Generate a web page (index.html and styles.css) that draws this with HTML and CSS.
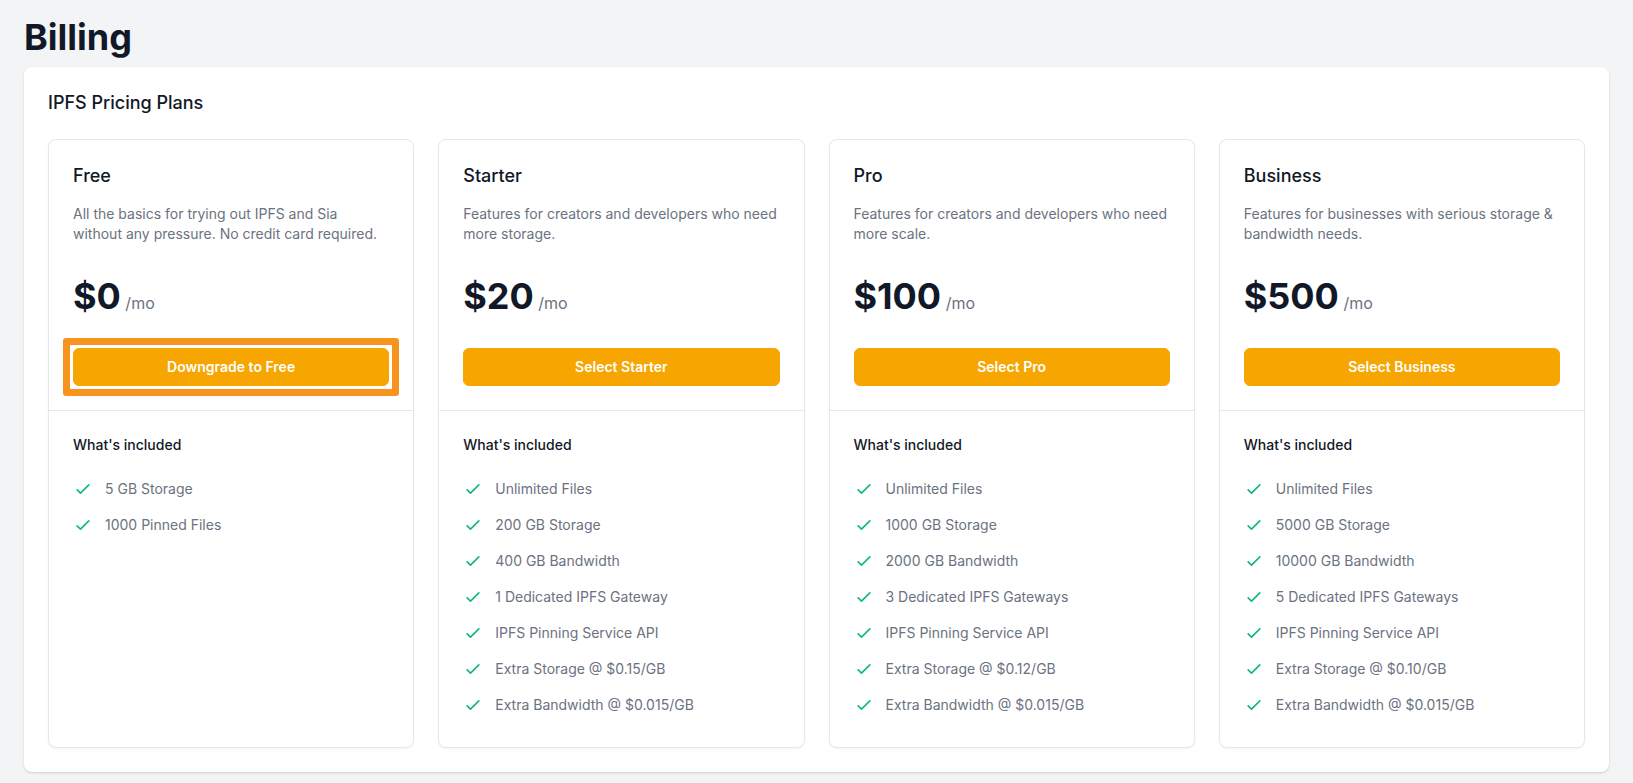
FILE: index.html
```html
<!DOCTYPE html>
<html lang="en">
<head>
<meta charset="utf-8">
<title>Billing</title>
<link rel="stylesheet" href="styles.css">
</head>
<body>
<main class="page">
  <h1 class="page-title">Billing</h1>
  <section class="panel">
    <h2 class="panel-title">IPFS Pricing Plans</h2>
    <div class="plans">
      <div class="plan">
        <div class="plan-top">
          <h3 class="plan-name">Free</h3>
          <p class="plan-desc">All the basics for trying out IPFS and Sia without any pressure. No credit card required.</p>
          <p class="plan-price"><span class="amount">$0</span> <span class="per">/mo</span></p>
          <a class="plan-btn is-focused" href="#">Downgrade to Free</a>
        </div>
        <div class="plan-bottom">
          <h4 class="incl">What's included</h4>
          <ul class="features">
            <li><svg class="check" viewBox="0 0 24 24" fill="none" stroke="currentColor" stroke-width="2" stroke-linecap="round" stroke-linejoin="round"><path d="M5 13l4 4L19 7"/></svg><span>5 GB Storage</span></li>
            <li><svg class="check" viewBox="0 0 24 24" fill="none" stroke="currentColor" stroke-width="2" stroke-linecap="round" stroke-linejoin="round"><path d="M5 13l4 4L19 7"/></svg><span>1000 Pinned Files</span></li>
          </ul>
        </div>
      </div>

      <div class="plan">
        <div class="plan-top">
          <h3 class="plan-name">Starter</h3>
          <p class="plan-desc">Features for creators and developers who need more storage.</p>
          <p class="plan-price"><span class="amount">$20</span> <span class="per">/mo</span></p>
          <a class="plan-btn" href="#">Select Starter</a>
        </div>
        <div class="plan-bottom">
          <h4 class="incl">What's included</h4>
          <ul class="features">
            <li><svg class="check" viewBox="0 0 24 24" fill="none" stroke="currentColor" stroke-width="2" stroke-linecap="round" stroke-linejoin="round"><path d="M5 13l4 4L19 7"/></svg><span>Unlimited Files</span></li>
            <li><svg class="check" viewBox="0 0 24 24" fill="none" stroke="currentColor" stroke-width="2" stroke-linecap="round" stroke-linejoin="round"><path d="M5 13l4 4L19 7"/></svg><span>200 GB Storage</span></li>
            <li><svg class="check" viewBox="0 0 24 24" fill="none" stroke="currentColor" stroke-width="2" stroke-linecap="round" stroke-linejoin="round"><path d="M5 13l4 4L19 7"/></svg><span>400 GB Bandwidth</span></li>
            <li><svg class="check" viewBox="0 0 24 24" fill="none" stroke="currentColor" stroke-width="2" stroke-linecap="round" stroke-linejoin="round"><path d="M5 13l4 4L19 7"/></svg><span>1 Dedicated IPFS Gateway</span></li>
            <li><svg class="check" viewBox="0 0 24 24" fill="none" stroke="currentColor" stroke-width="2" stroke-linecap="round" stroke-linejoin="round"><path d="M5 13l4 4L19 7"/></svg><span>IPFS Pinning Service API</span></li>
            <li><svg class="check" viewBox="0 0 24 24" fill="none" stroke="currentColor" stroke-width="2" stroke-linecap="round" stroke-linejoin="round"><path d="M5 13l4 4L19 7"/></svg><span>Extra Storage @ $0.15/GB</span></li>
            <li><svg class="check" viewBox="0 0 24 24" fill="none" stroke="currentColor" stroke-width="2" stroke-linecap="round" stroke-linejoin="round"><path d="M5 13l4 4L19 7"/></svg><span>Extra Bandwidth @ $0.015/GB</span></li>
          </ul>
        </div>
      </div>

      <div class="plan">
        <div class="plan-top">
          <h3 class="plan-name">Pro</h3>
          <p class="plan-desc">Features for creators and developers who need more scale.</p>
          <p class="plan-price"><span class="amount">$100</span> <span class="per">/mo</span></p>
          <a class="plan-btn" href="#">Select Pro</a>
        </div>
        <div class="plan-bottom">
          <h4 class="incl">What's included</h4>
          <ul class="features">
            <li><svg class="check" viewBox="0 0 24 24" fill="none" stroke="currentColor" stroke-width="2" stroke-linecap="round" stroke-linejoin="round"><path d="M5 13l4 4L19 7"/></svg><span>Unlimited Files</span></li>
            <li><svg class="check" viewBox="0 0 24 24" fill="none" stroke="currentColor" stroke-width="2" stroke-linecap="round" stroke-linejoin="round"><path d="M5 13l4 4L19 7"/></svg><span>1000 GB Storage</span></li>
            <li><svg class="check" viewBox="0 0 24 24" fill="none" stroke="currentColor" stroke-width="2" stroke-linecap="round" stroke-linejoin="round"><path d="M5 13l4 4L19 7"/></svg><span>2000 GB Bandwidth</span></li>
            <li><svg class="check" viewBox="0 0 24 24" fill="none" stroke="currentColor" stroke-width="2" stroke-linecap="round" stroke-linejoin="round"><path d="M5 13l4 4L19 7"/></svg><span>3 Dedicated IPFS Gateways</span></li>
            <li><svg class="check" viewBox="0 0 24 24" fill="none" stroke="currentColor" stroke-width="2" stroke-linecap="round" stroke-linejoin="round"><path d="M5 13l4 4L19 7"/></svg><span>IPFS Pinning Service API</span></li>
            <li><svg class="check" viewBox="0 0 24 24" fill="none" stroke="currentColor" stroke-width="2" stroke-linecap="round" stroke-linejoin="round"><path d="M5 13l4 4L19 7"/></svg><span>Extra Storage @ $0.12/GB</span></li>
            <li><svg class="check" viewBox="0 0 24 24" fill="none" stroke="currentColor" stroke-width="2" stroke-linecap="round" stroke-linejoin="round"><path d="M5 13l4 4L19 7"/></svg><span>Extra Bandwidth @ $0.015/GB</span></li>
          </ul>
        </div>
      </div>

      <div class="plan">
        <div class="plan-top">
          <h3 class="plan-name">Business</h3>
          <p class="plan-desc">Features for businesses with serious storage &amp; bandwidth needs.</p>
          <p class="plan-price"><span class="amount">$500</span> <span class="per">/mo</span></p>
          <a class="plan-btn" href="#">Select Business</a>
        </div>
        <div class="plan-bottom">
          <h4 class="incl">What's included</h4>
          <ul class="features">
            <li><svg class="check" viewBox="0 0 24 24" fill="none" stroke="currentColor" stroke-width="2" stroke-linecap="round" stroke-linejoin="round"><path d="M5 13l4 4L19 7"/></svg><span>Unlimited Files</span></li>
            <li><svg class="check" viewBox="0 0 24 24" fill="none" stroke="currentColor" stroke-width="2" stroke-linecap="round" stroke-linejoin="round"><path d="M5 13l4 4L19 7"/></svg><span>5000 GB Storage</span></li>
            <li><svg class="check" viewBox="0 0 24 24" fill="none" stroke="currentColor" stroke-width="2" stroke-linecap="round" stroke-linejoin="round"><path d="M5 13l4 4L19 7"/></svg><span>10000 GB Bandwidth</span></li>
            <li><svg class="check" viewBox="0 0 24 24" fill="none" stroke="currentColor" stroke-width="2" stroke-linecap="round" stroke-linejoin="round"><path d="M5 13l4 4L19 7"/></svg><span>5 Dedicated IPFS Gateways</span></li>
            <li><svg class="check" viewBox="0 0 24 24" fill="none" stroke="currentColor" stroke-width="2" stroke-linecap="round" stroke-linejoin="round"><path d="M5 13l4 4L19 7"/></svg><span>IPFS Pinning Service API</span></li>
            <li><svg class="check" viewBox="0 0 24 24" fill="none" stroke="currentColor" stroke-width="2" stroke-linecap="round" stroke-linejoin="round"><path d="M5 13l4 4L19 7"/></svg><span>Extra Storage @ $0.10/GB</span></li>
            <li><svg class="check" viewBox="0 0 24 24" fill="none" stroke="currentColor" stroke-width="2" stroke-linecap="round" stroke-linejoin="round"><path d="M5 13l4 4L19 7"/></svg><span>Extra Bandwidth @ $0.015/GB</span></li>
          </ul>
        </div>
      </div>
    </div>
  </section>
</main>
</body>
</html>
```
FILE: styles.css
```css
* { box-sizing: border-box; }
html, body { margin: 0; padding: 0; }
body {
  background: #f3f4f6;
  font-family: Inter, "Noto Sans", "Liberation Sans", sans-serif;
  color: #111827;
  font-size: 16px;
  line-height: 24px;
}
.page {
  padding: 17px 24px 11px;
}
.page-title {
  margin: 0 0 10px;
  font-size: 36px;
  line-height: 40px;
  font-weight: 700;
  color: #111827;
}
.panel {
  background: #fff;
  border-radius: 8px;
  box-shadow: 0 1px 3px rgba(0,0,0,0.1), 0 1px 2px rgba(0,0,0,0.06);
  padding: 24px;
}
.panel-title {
  margin: 0 0 24px;
  font-size: 18px;
  line-height: 24px;
  font-weight: 500;
  color: #111827;
}
.plans {
  display: grid;
  grid-template-columns: repeat(4, 1fr);
  gap: 24px;
}
.plan {
  border: 1px solid #e5e7eb;
  border-radius: 8px;
  box-shadow: 0 1px 2px rgba(0,0,0,0.05);
  background: #fff;
}
.plan-top {
  padding: 24px;
  border-bottom: 1px solid #e5e7eb;
}
.plan-name {
  margin: 0;
  font-size: 18px;
  line-height: 24px;
  font-weight: 500;
  color: #111827;
}
.plan-desc {
  margin: 16px 0 0;
  font-size: 14px;
  line-height: 20px;
  color: #6b7280;
  height: 40px;
}
.plan-price {
  margin: 32px 0 0;
}
.amount {
  font-size: 36px;
  line-height: 40px;
  font-weight: 700;
  color: #111827;
}
.per {
  font-size: 16px;
  font-weight: 400;
  color: #6b7280;
}
.plan-btn {
  display: block;
  margin-top: 32px;
  background: #f7a500;
  border: 1px solid #f7a500;
  border-radius: 6px;
  padding: 8px 0;
  text-align: center;
  font-size: 14px;
  line-height: 20px;
  font-weight: 600;
  color: #fff;
  text-decoration: none;
}
.plan-btn.is-focused {
  position: relative;
}
.plan-btn.is-focused::after {
  content: "";
  position: absolute;
  inset: -11px;
  border: 7px solid #f8941e;
  border-radius: 3px;
  pointer-events: none;
}
.plan-bottom {
  padding: 24px 24px 32px;
}
.incl {
  margin: 0;
  font-size: 14px;
  line-height: 20px;
  font-weight: 500;
  color: #111827;
}
.features {
  list-style: none;
  margin: 24px 0 0;
  padding: 0;
  display: flex;
  flex-direction: column;
  gap: 16px;
}
.features li {
  display: flex;
  gap: 12px;
  font-size: 14px;
  line-height: 20px;
  color: #6b7280;
}
.check {
  flex-shrink: 0;
  width: 20px;
  height: 20px;
  color: #10b981;
}
```
